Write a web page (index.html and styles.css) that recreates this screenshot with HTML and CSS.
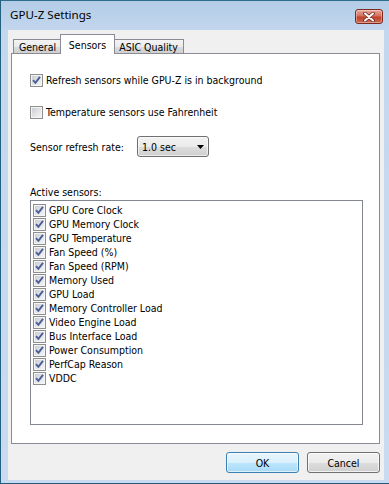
FILE: index.html
```html
<!DOCTYPE html>
<html>
<head>
<meta charset="utf-8">
<link rel="stylesheet" href="styles.css">
</head>
<body>
<div class="window">
  <div class="titlebar">
    <span class="title">GPU-Z Settings</span>
    <div class="close">
      <svg width="14" height="10" viewBox="0 0 14 10">
        <path d="M3 1.5 L11 8.5 M11 1.5 L3 8.5" stroke="#6b2a22" stroke-width="3.6" stroke-linecap="round"/>
        <path d="M3 1.5 L11 8.5 M11 1.5 L3 8.5" stroke="#ffffff" stroke-width="2" stroke-linecap="round"/>
      </svg>
    </div>
  </div>
  <div class="client">
    <div class="tabs">
      <div class="tab tab-general">General</div>
      <div class="tab tab-sensors active">Sensors</div>
      <div class="tab tab-asic">ASIC Quality</div>
    </div>
    <div class="panel">
      <div class="check-row first">
        <span class="cb"><svg class="tick" width="11" height="11" viewBox="0 0 11 11"><path d="M2 5.2 L4.4 7.8 L9 1.8" stroke="#4a5f97" stroke-width="1.9" fill="none"/></svg></span>
        <span class="lbl">Refresh sensors while GPU-Z is in background</span>
      </div>
      <div class="check-row second">
        <span class="cb"></span>
        <span class="lbl">Temperature sensors use Fahrenheit</span>
      </div>
      <div class="rate-row">
        <span class="rate-label">Sensor refresh rate:</span>
        <div class="select">
          <span>1.0 sec</span>
          <svg class="arrow" width="7" height="4" viewBox="0 0 7 4"><path d="M0 0 H7 L3.5 4 Z" fill="#000"/></svg>
        </div>
      </div>
      <div class="list-label">Active sensors:</div>
      <div class="list">
        <div class="item"><span class="cb"><svg class="tick" width="11" height="11" viewBox="0 0 11 11"><path d="M2 5.2 L4.4 7.8 L9 1.8" stroke="#4a5f97" stroke-width="1.9" fill="none"/></svg></span><span>GPU Core Clock</span></div>
        <div class="item"><span class="cb"><svg class="tick" width="11" height="11" viewBox="0 0 11 11"><path d="M2 5.2 L4.4 7.8 L9 1.8" stroke="#4a5f97" stroke-width="1.9" fill="none"/></svg></span><span>GPU Memory Clock</span></div>
        <div class="item"><span class="cb"><svg class="tick" width="11" height="11" viewBox="0 0 11 11"><path d="M2 5.2 L4.4 7.8 L9 1.8" stroke="#4a5f97" stroke-width="1.9" fill="none"/></svg></span><span>GPU Temperature</span></div>
        <div class="item"><span class="cb"><svg class="tick" width="11" height="11" viewBox="0 0 11 11"><path d="M2 5.2 L4.4 7.8 L9 1.8" stroke="#4a5f97" stroke-width="1.9" fill="none"/></svg></span><span>Fan Speed (%)</span></div>
        <div class="item"><span class="cb"><svg class="tick" width="11" height="11" viewBox="0 0 11 11"><path d="M2 5.2 L4.4 7.8 L9 1.8" stroke="#4a5f97" stroke-width="1.9" fill="none"/></svg></span><span>Fan Speed (RPM)</span></div>
        <div class="item"><span class="cb"><svg class="tick" width="11" height="11" viewBox="0 0 11 11"><path d="M2 5.2 L4.4 7.8 L9 1.8" stroke="#4a5f97" stroke-width="1.9" fill="none"/></svg></span><span>Memory Used</span></div>
        <div class="item"><span class="cb"><svg class="tick" width="11" height="11" viewBox="0 0 11 11"><path d="M2 5.2 L4.4 7.8 L9 1.8" stroke="#4a5f97" stroke-width="1.9" fill="none"/></svg></span><span>GPU Load</span></div>
        <div class="item"><span class="cb"><svg class="tick" width="11" height="11" viewBox="0 0 11 11"><path d="M2 5.2 L4.4 7.8 L9 1.8" stroke="#4a5f97" stroke-width="1.9" fill="none"/></svg></span><span>Memory Controller Load</span></div>
        <div class="item"><span class="cb"><svg class="tick" width="11" height="11" viewBox="0 0 11 11"><path d="M2 5.2 L4.4 7.8 L9 1.8" stroke="#4a5f97" stroke-width="1.9" fill="none"/></svg></span><span>Video Engine Load</span></div>
        <div class="item"><span class="cb"><svg class="tick" width="11" height="11" viewBox="0 0 11 11"><path d="M2 5.2 L4.4 7.8 L9 1.8" stroke="#4a5f97" stroke-width="1.9" fill="none"/></svg></span><span>Bus Interface Load</span></div>
        <div class="item"><span class="cb"><svg class="tick" width="11" height="11" viewBox="0 0 11 11"><path d="M2 5.2 L4.4 7.8 L9 1.8" stroke="#4a5f97" stroke-width="1.9" fill="none"/></svg></span><span>Power Consumption</span></div>
        <div class="item"><span class="cb"><svg class="tick" width="11" height="11" viewBox="0 0 11 11"><path d="M2 5.2 L4.4 7.8 L9 1.8" stroke="#4a5f97" stroke-width="1.9" fill="none"/></svg></span><span>PerfCap Reason</span></div>
        <div class="item"><span class="cb"><svg class="tick" width="11" height="11" viewBox="0 0 11 11"><path d="M2 5.2 L4.4 7.8 L9 1.8" stroke="#4a5f97" stroke-width="1.9" fill="none"/></svg></span><span>VDDC</span></div>
      </div>
    </div>
    <div class="buttons">
      <div class="btn default">OK</div>
      <div class="btn">Cancel</div>
    </div>
  </div>
</div>
</body>
</html>
```
FILE: styles.css
```css
html, body {
  margin: 0;
  padding: 0;
}
body {
  width: 389px;
  height: 484px;
  overflow: hidden;
  font-family: "DejaVu Sans Condensed", "DejaVu Sans", sans-serif;
  font-stretch: condensed;
  font-size: 10.5px;
  color: #000;
}
.window {
  box-sizing: border-box;
  width: 389px;
  height: 484px;
  border-left: 1px solid #23607f;
  border-top: 1px solid #2c6c8c;
  border-bottom: 1px solid #235c7a;
  background: linear-gradient(180deg, #b4cce7 0px, #c3d7ee 30px, #c8dbf0 100%);
  padding: 0 5px 3px 7px;
  display: flex;
  flex-direction: column;
}
.titlebar {
  height: 29px;
  flex: none;
  display: flex;
  align-items: flex-start;
  justify-content: space-between;
}
.title {
  font-family: "Noto Sans", "Open Sans", sans-serif;
  font-stretch: normal;
  font-size: 11.6px;
  margin-left: 2px;
  margin-top: 6px;
  line-height: 16px;
  color: #000;
}
.close {
  box-sizing: border-box;
  width: 28px;
  height: 15px;
  margin-top: 8px;
  margin-right: 1px;
  border: 1px solid #7a2a20;
  border-radius: 3px;
  background: linear-gradient(180deg, #e9a99b 0%, #d4705c 45%, #c0402a 55%, #cf6a50 100%);
  box-shadow: inset 0 0 0 1px rgba(255,255,255,0.35);
  display: flex;
  align-items: center;
  justify-content: center;
}
.client {
  flex: 1;
  background: #f0f0f0;
  display: flex;
  flex-direction: column;
}
.tabs {
  height: 20px;
  margin-top: 4px;
  margin-left: 5px;
  display: flex;
  align-items: flex-end;
  position: relative;
  z-index: 2;
}
.tab {
  box-sizing: border-box;
  height: 14px;
  margin-bottom: 1px;
  border: 1px solid #898c95;
  border-bottom: none;
  background: linear-gradient(180deg, #f3f3f3 0%, #ebebeb 50%, #dddddd 51%, #cfcfcf 100%);
  display: flex;
  align-items: center;
  justify-content: center;
  line-height: 12px;
  padding-top: 1px;
}
.tab-general {
  width: 49px;
}
.tab-sensors {
  width: 55px;
  margin-left: -2px;
}
.tab-asic {
  width: 71px;
  margin-left: -2px;
}
.tab.active {
  height: 20px;
  margin-bottom: 0;
  background: #ffffff;
  position: relative;
  z-index: 3;
  align-items: flex-start;
  padding-top: 4px;
}
.panel {
  box-sizing: border-box;
  width: 369px;
  height: 391px;
  margin-top: -1px;
  margin-left: 3px;
  border: 1px solid #898c95;
  background: #ffffff;
  padding: 20px 0 0 18px;
  display: flex;
  flex-direction: column;
  flex: none;
}
.check-row {
  display: flex;
  align-items: center;
  height: 13px;
}
.check-row.second {
  margin-top: 19px;
}
.cb {
  box-sizing: border-box;
  width: 13px;
  height: 13px;
  flex: none;
  border: 1px solid #8f8f8f;
  background: linear-gradient(135deg, #c5c9cf 0%, #e6e7e9 60%, #f7f7f7 100%);
  box-shadow: inset 0 0 0 1px #f4f4f4;
  display: flex;
  align-items: center;
  justify-content: center;
}
.tick {
  display: block;
}
.lbl {
  margin-left: 3px;
  line-height: 13px;
  white-space: nowrap;
}
.rate-row {
  margin-top: 17px;
  height: 21px;
  display: flex;
  align-items: center;
}
.rate-label {
  width: 107px;
  flex: none;
}
.select {
  box-sizing: border-box;
  width: 72px;
  height: 21px;
  border: 1px solid #707070;
  border-radius: 3px;
  background: linear-gradient(180deg, #f2f2f2 0%, #ebebeb 50%, #dddddd 51%, #cfcfcf 100%);
  box-shadow: inset 0 0 0 1px rgba(255,255,255,0.6);
  display: flex;
  align-items: center;
  justify-content: space-between;
  padding: 0 4px 0 4px;
}
.arrow {
  display: block;
}
.list-label {
  margin-top: 28px;
  line-height: 15px;
  height: 15px;
}
.list {
  box-sizing: border-box;
  width: 333px;
  height: 225px;
  border: 1px solid #828790;
  background: #ffffff;
  padding: 2px 0 0 2px;
}
.item {
  display: flex;
  align-items: center;
  height: 14px;
  white-space: nowrap;
}
.item .cb {
  margin-right: 3px;
}
.buttons {
  margin-top: 8px;
  display: flex;
  justify-content: flex-end;
  padding-right: 4px;
}
.btn {
  box-sizing: border-box;
  width: 73px;
  height: 21px;
  border: 1px solid #707070;
  border-radius: 3px;
  background: linear-gradient(180deg, #f2f2f2 0%, #ebebeb 50%, #dddddd 51%, #cfcfcf 100%);
  box-shadow: inset 0 0 0 1px rgba(255,255,255,0.7);
  display: flex;
  align-items: center;
  justify-content: center;
  margin-left: 8px;
}
.btn.default {
  border-color: #3c7fb1;
  background: linear-gradient(180deg, #eaf6fd 0%, #d9f0fc 50%, #bee6fd 51%, #a7d9f5 100%);
  box-shadow: inset 0 0 0 1px rgba(255,255,255,0.6);
}
```
